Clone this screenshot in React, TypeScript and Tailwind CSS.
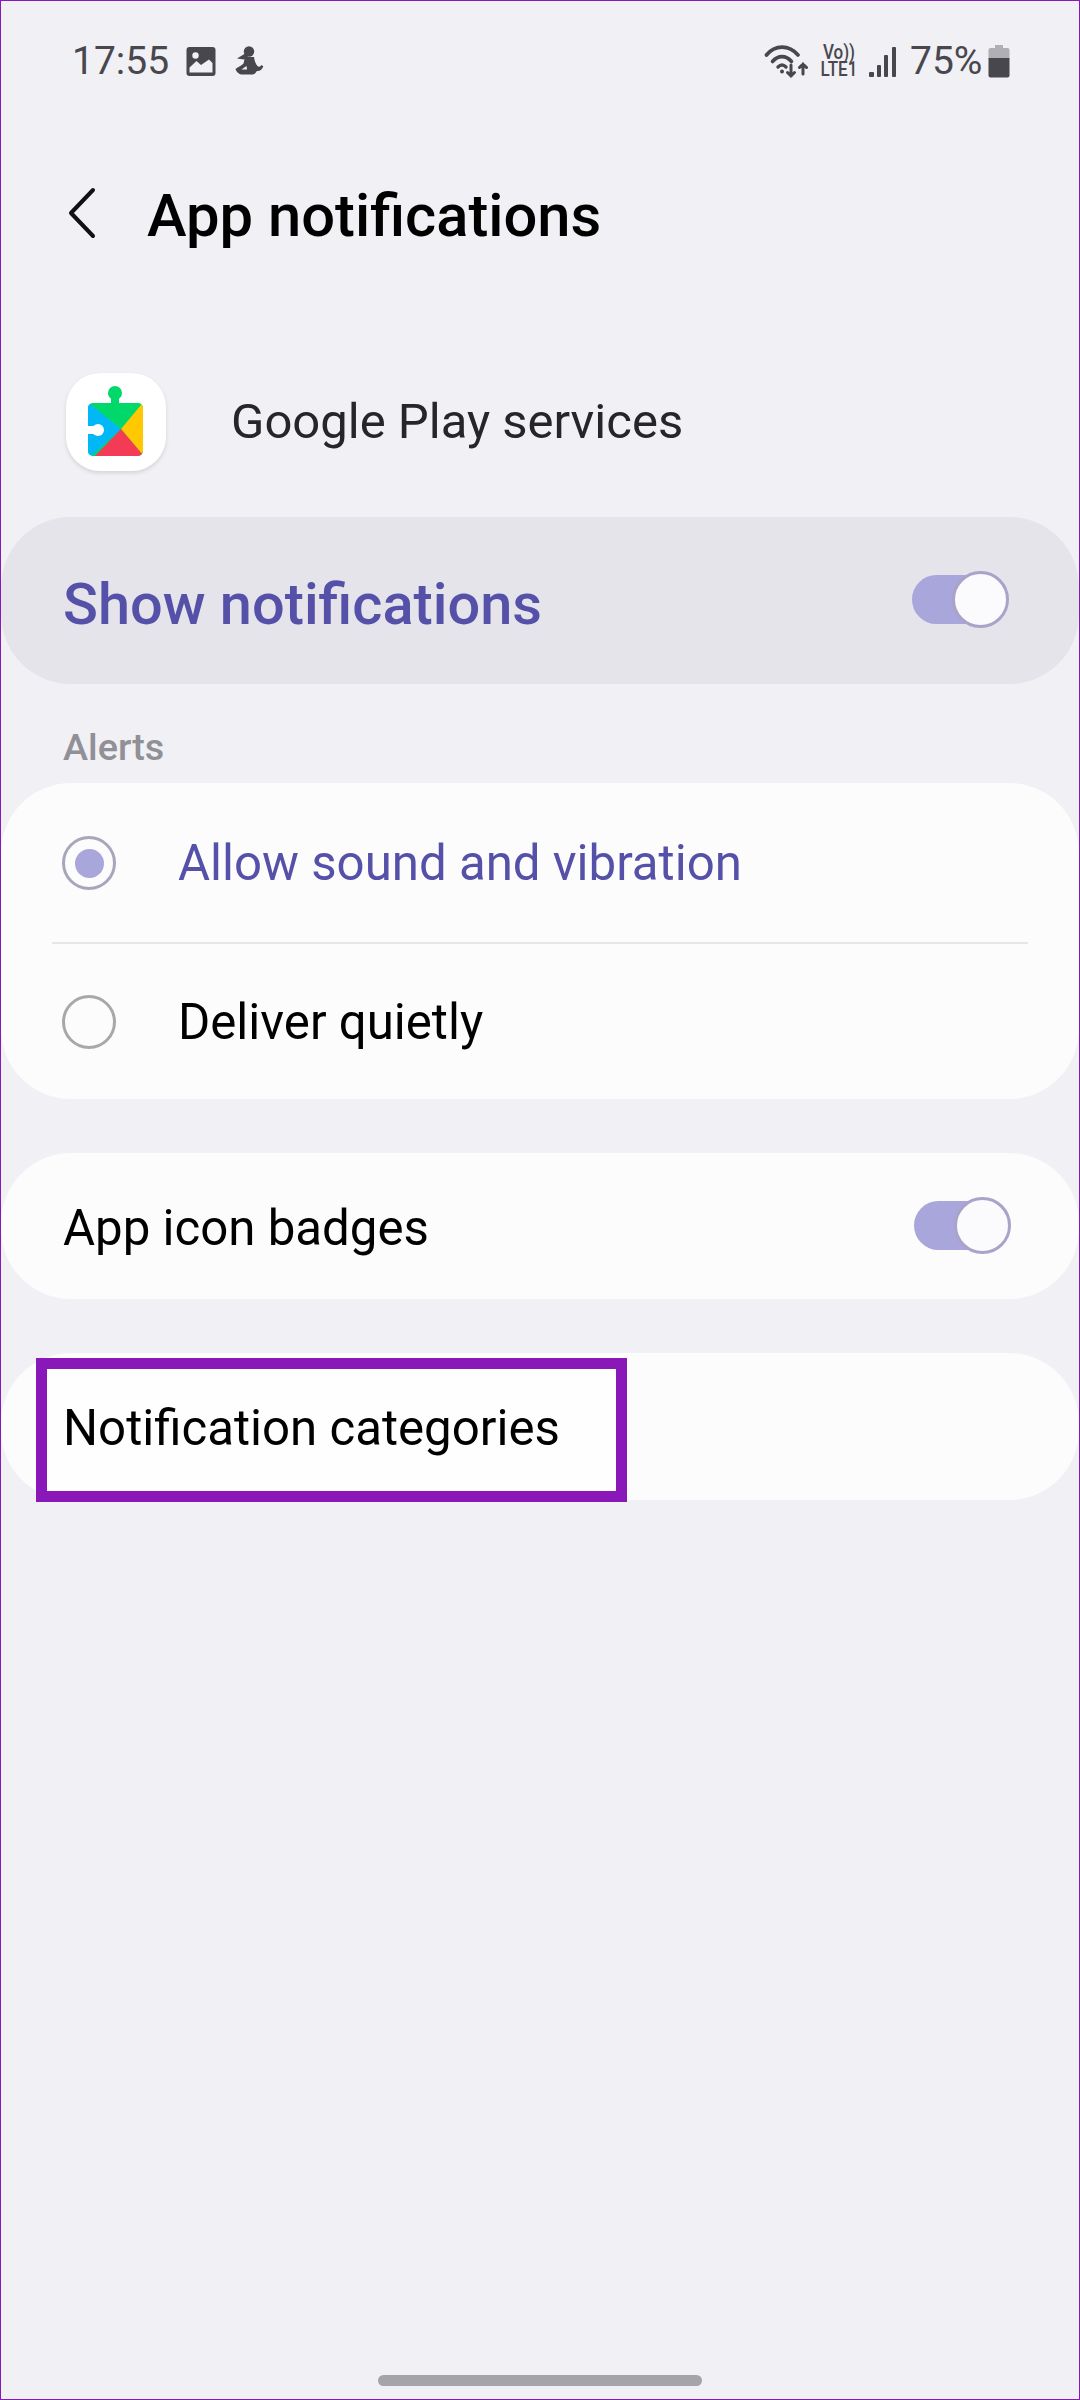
const roboto = "font-['Roboto',sans-serif]";

function GalleryGlyph() {
  return (
    <svg width="30" height="30" viewBox="0 0 30 30" className="absolute left-[185px] top-[45px]">
      <rect x="0.5" y="1" width="29" height="29" rx="3" fill="#48474d" />
      <circle cx="9.500" cy="9.500" r="3.200" fill="#f0f0f5" />
      <path d="M3.500 26.500v-5l7-6.500 4.500 4 8-5.500 3.500 3.500v9.500z" fill="#f0f0f5" />
    </svg>
  );
}

function FigureGlyph() {
  return (
    <svg width="30" height="32" viewBox="0 0 30 32" className="absolute left-[233px] top-[44px]" fill="#48474d">
      <circle cx="15" cy="6.500" r="5.200" />
      <path d="M12 8 3 13.500l7 1 4-3z" />
      <path d="M10.500 12h9.500c.5 3.500 1.500 7 3.500 9 1.200 1.200 2.800 1 3.800-1l2 1.300c-1 3.500-3.700 5.200-6.500 4.700-1 2.300-2.800 3.500-5.300 3.500H8.500C5.500 29.500 2.500 27.500 1.500 24c2.800-2 6-3.500 8-5.500.8-2.300 1-4.300 1-6.500z" />
      <path d="M7.500 24.500 12.500 21l.6 3.500z" fill="#f0f0f5" />
    </svg>
  );
}

function WifiGlyph() {
  return (
    <svg width="44" height="34" viewBox="0 0 44 34" className="absolute left-[763px] top-[44px]" fill="none" stroke="#48474d" strokeLinecap="round">
      <path d="M2.500 10C11 -0.500 25 -0.500 34 10" strokeWidth="3.600" />
      <path d="M8.500 16.500C14 10 22 10 27.500 16.500" strokeWidth="3.600" />
      <path d="M14 22c2.500-2.500 5.500-2.500 8 0" strokeWidth="3.400" />
      <circle cx="18" cy="26.500" r="2" fill="#48474d" stroke="none" />
      <path d="M27 20v11M23.500 27.500 27 31l3.500-3.500" strokeWidth="3" />
      <path d="M39 29V19M35.500 22.500 39 19l3.500 3.500" strokeWidth="3" />
    </svg>
  );
}

function SignalGlyph() {
  return (
    <svg width="30" height="32" viewBox="0 0 30 32" className="absolute left-[865px] top-[45px]" fill="#48474d">
      <rect x="3" y="26" width="5" height="5" rx="1" />
      <rect x="11" y="19" width="4" height="12" rx="1" />
      <rect x="18" y="9" width="4" height="22" rx="1" />
      <rect x="26" y="1" width="4" height="30" rx="1" />
    </svg>
  );
}

function BatteryGlyph() {
  return (
    <svg width="22" height="34" viewBox="0 0 22 34" className="absolute left-[987px] top-[43px]">
      <path d="M7 1h8v3h4.500a2 2 0 0 1 2 2v9H.5V6a2 2 0 0 1 2-2H7z" fill="#b0afb4" />
      <path d="M.5 14h21v17.500a2 2 0 0 1-2 2h-17a2 2 0 0 1-2-2z" fill="#48474d" />
    </svg>
  );
}

function PlayServicesLogo() {
  return (
    <div className="w-[100px] h-[98px] rounded-[34px] bg-white shadow-[0_2px_4px_rgba(0,0,0,0.12)] shrink-0">
      <svg width="100" height="98" viewBox="0 0 100 98">
        <defs>
          <clipPath id="puzzle">
            <rect x="22" y="30" width="55" height="53" rx="5" />
            <circle cx="49" cy="20" r="7" />
            <rect x="45" y="20" width="8" height="12" />
          </clipPath>
        </defs>
        <g clipPath="url(#puzzle)">
          <rect x="20" y="10" width="60" height="75" fill="#00d86a" />
          <path d="M18 26 55 56 20 88z" fill="#00b8f6" />
          <path d="M80 26 55 56 80 86z" fill="#ffc800" />
          <path d="M24 88 55 56 82 88z" fill="#f33b56" />
        </g>
        <circle cx="32" cy="57" r="6" fill="#ffffff" />
        <rect x="20" y="53" width="12" height="8" fill="#ffffff" />
      </svg>
    </div>
  );
}

function Toggle({ shift }: { shift: string }) {
  return (
    <div className={`relative w-[97px] h-[57px] shrink-0 flex items-center ${shift}`}>
      <div className="w-[88px] h-[49px] rounded-full bg-[#a9a6dc]" />
      <div className="absolute right-0 top-0 w-[57px] h-[57px] rounded-full bg-[#fbfbfd] border-[3px] border-[#a9a3c9]" />
    </div>
  );
}

function Radio({ selected }: { selected: boolean }) {
  return (
    <div
      className={`w-[54px] h-[54px] rounded-full border-[3px] flex items-center justify-center shrink-0 ${
        selected ? "border-[#a8a6bb]" : "border-[#a8a8a8]"
      }`}
    >
      {selected && <div className="w-[29px] h-[29px] rounded-full bg-[#a9a6dc]" />}
    </div>
  );
}

export default function App() {
  return (
    <div className={`relative w-[1080px] h-[2400px] bg-[#f0f0f5] border border-[#8a18b8] flex flex-col overflow-hidden ${roboto}`}>
      {/* Status bar */}
      <div className="h-[119px] shrink-0 text-[#48474d]">
        <span className="absolute left-[71px] top-[37px] text-[39px] leading-[46px]">17:55</span>
        <GalleryGlyph />
        <FigureGlyph />
        <WifiGlyph />
        <div className="absolute left-[815px] top-[43px] w-[46px] text-center font-medium scale-x-[0.85] text-[20px] leading-[17px] whitespace-pre-line">
          {"Vo))\nLTE1"}
        </div>
        <SignalGlyph />
        <span className="absolute left-[909px] top-[37px] text-[39px] leading-[46px]">75%</span>
        <BatteryGlyph />
      </div>

      {/* Title row */}
      <div className="h-[188px] shrink-0 flex items-center pl-[66px] -mt-[1px]">
        <svg width="30" height="52" viewBox="0 0 30 52" fill="none" stroke="#111" strokeWidth="4" strokeLinecap="round" strokeLinejoin="round">
          <path d="M26 3 4 26l22 23" />
        </svg>
        <h1 className="ml-[50px] text-[59.7px] leading-[70px] font-medium text-black translate-y-[3px]">App notifications</h1>
      </div>

      {/* Application name */}
      <div className="mt-[65px] h-[100px] shrink-0 flex items-center pl-[65px]">
        <PlayServicesLogo />
        <span className="ml-[65px] text-[49px] leading-[56px] text-[#25252a]">Google Play services</span>
      </div>

      {/* Master switch */}
      <div className="mt-[45px] h-[167px] shrink-0 rounded-[70px] bg-[#e4e4ea] flex items-center justify-between pl-[62px] pr-[70px]">
        <span className="text-[57.7px] leading-[64px] font-medium text-[#5651a8] translate-y-[3px]">Show notifications</span>
        <Toggle shift="-translate-y-[1px]" />
      </div>

      <div className="h-[99px] shrink-0 pl-[62px] pt-[42px] text-[37.8px] leading-[42px] font-medium text-[#909096]">Alerts</div>

      {/* Alert style */}
      <div className="h-[316px] shrink-0 rounded-[70px] bg-[#fcfcfd] flex flex-col">
        <div className="h-[159px] shrink-0 flex items-center pl-[61px] pt-[1px]">
          <Radio selected />
          <span className="ml-[62px] text-[49.2px] leading-[58px] text-[#5651a8]">Allow sound and vibration</span>
        </div>
        <div className="h-[2px] mx-[51px] shrink-0 bg-[#e6e6ea]" />
        <div className="flex-1 flex items-center pl-[61px]">
          <Radio selected={false} />
          <span className="ml-[62px] text-[49.2px] leading-[58px] text-black">Deliver quietly</span>
        </div>
      </div>

      <div className="mt-[54px] h-[146px] shrink-0 rounded-[70px] bg-[#fcfcfd] flex items-center justify-between pl-[62px] pr-[68px]">
        <span className="text-[49.2px] leading-[58px] text-black translate-y-[2px]">App icon badges</span>
        <Toggle shift="-translate-y-[1px]" />
      </div>

      <div className="mt-[54px] h-[147px] shrink-0 rounded-[70px] bg-[#fcfcfd] flex items-center pl-[62px]">
        <span className="relative z-10 text-[49.2px] leading-[58px] text-black translate-y-[1px]">Notification categories</span>
      </div>

      {/* Callout around the categories row */}
      <div className="absolute left-[35px] top-[1357px] w-[591px] h-[144px] border-[11px] border-[#8a18b8] bg-[#fefefe]" />

      {/* Gesture pill */}
      <div className="mt-auto mb-[13px] self-center w-[324px] h-[11px] rounded-full bg-[#a5a4a9]" />
    </div>
  );
}
